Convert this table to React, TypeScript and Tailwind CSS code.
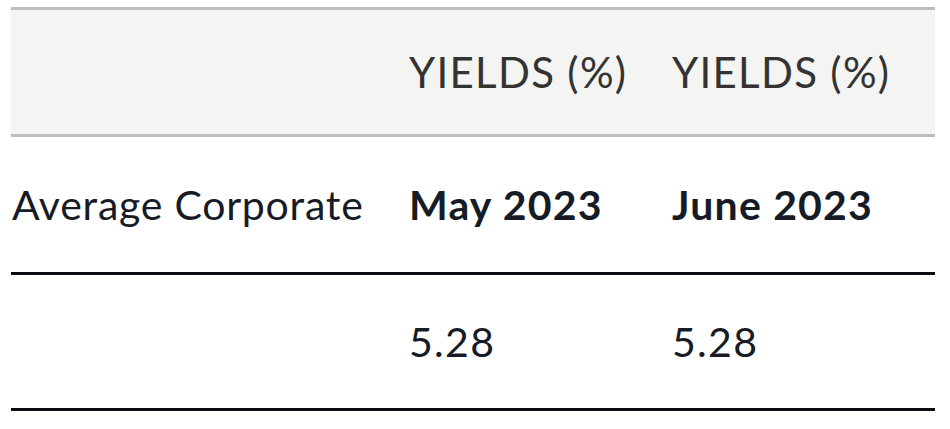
import React from 'react';

const months = ['May 2023', 'June 2023'];
const values = ['5.28', '5.28'];

export default function App() {
  return (
    <div className="w-[950px] h-[429px] bg-white font-['Lato',sans-serif] pt-[7px] pl-[11px]">
      <div className="w-[924px]">
        <div className="grid grid-cols-[398px_263px_263px] h-[130px] items-center bg-[#f4f4f2] border-y-[3px] border-[#bdbdbb] text-[#333333] text-[42px] tracking-[1.3px]">
          <div />
          <div>YIELDS (%)</div>
          <div>YIELDS (%)</div>
        </div>
        <div className="grid grid-cols-[398px_263px_263px] h-[138px] items-center border-b-[3px] border-[#0b0d12] text-[#161b26] text-[41px]">
          <div className="pl-px tracking-[0.75px]">Average Corporate</div>
          {months.map(m => (
            <div key={m} className="font-bold tracking-[1.2px]">{m}</div>
          ))}
        </div>
        <div className="grid grid-cols-[398px_263px_263px] h-[136px] items-center border-b-[3px] border-[#0b0d12] text-[#161b26] text-[41px] tracking-[1.3px]">
          <div />
          {values.map((v, i) => (
            <div key={i}>{v}</div>
          ))}
        </div>
      </div>
    </div>
  );
}
